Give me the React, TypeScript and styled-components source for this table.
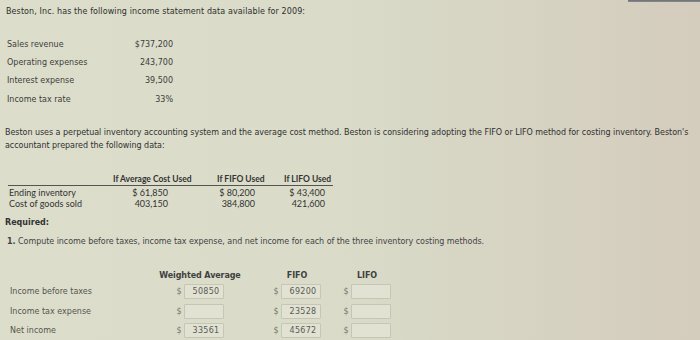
import React from "react";
import styled, { createGlobalStyle } from "styled-components";

const GlobalStyle = createGlobalStyle`
  html, body {
    margin: 0;
    padding: 0;
  }
  body {
    width: 700px;
    height: 340px;
    overflow: hidden;
    font-family: "DejaVu Sans", Verdana, sans-serif;
  }
`;

type Figure = { label: string; value: string };

const incomeData: Figure[] = [
  { label: "Sales revenue", value: "$737,200" },
  { label: "Operating expenses", value: "243,700" },
  { label: "Interest expense", value: "39,500" },
  { label: "Income tax rate", value: "33%" },
];

type InvColumn = { title: string; first: string; second: string; pad: number; headPad: number };

const invColumns: InvColumn[] = [
  { title: "If Average Cost Used", first: "$ 61,850", second: "403,150", pad: 30, headPad: 5 },
  { title: "If FIFO Used", first: "$ 80,200", second: "384,800", pad: 29, headPad: 19 },
  { title: "If LIFO Used", first: "$ 43,400", second: "421,600", pad: 8, headPad: 0 },
];

type AnswerRow = { label: string; values: string[] };

const answers: AnswerRow[] = [
  { label: "Income before taxes", values: ["50850", "69200", ""] },
  { label: "Income tax expense", values: ["", "23528", ""] },
  { label: "Net income", values: ["33561", "45672", ""] },
];

const answerCols = [
  { title: "Weighted Average", width: 80 },
  { title: "FIFO", width: 114 },
  { title: "LIFO", width: 26 },
];

const App = () => {
  return (
    <Page>
      <GlobalStyle />
      <Title>Beston, Inc. has the following income statement data available for 2009:</Title>

      <DataList>
        {incomeData.map((item) => (
          <React.Fragment key={item.label}>
            <DataLabel>{item.label}</DataLabel>
            <DataValue>{item.value}</DataValue>
          </React.Fragment>
        ))}
      </DataList>

      <Paragraph>
        Beston uses a perpetual inventory accounting system and the average cost method. Beston is
        considering adopting the FIFO or LIFO method for costing inventory. Beston's
        <br />
        accountant prepared the following data:
      </Paragraph>

      <InvTable>
        <InvHead />
        {invColumns.map((c) => (
          <InvHead key={c.title} $pad={c.headPad}>
            {c.title}
          </InvHead>
        ))}
        <InvLabel>
          Ending inventory
          <br />
          Cost of goods sold
        </InvLabel>
        {invColumns.map((c) => (
          <InvValue key={c.title} $pad={c.pad}>
            {c.first}
            <br />
            {c.second}
          </InvValue>
        ))}
      </InvTable>

      <Required>Required:</Required>
      <Instruction>
        <b>1.</b> Compute income before taxes, income tax expense, and net income for each of the three
        inventory costing methods.
      </Instruction>

      <AnswerGrid>
        <AnswerRowBox $head>
          <RowLabel />
          {answerCols.map((c) => (
            <Cell key={c.title} $width={c.width}>
              <ColHead>{c.title}</ColHead>
            </Cell>
          ))}
        </AnswerRowBox>
        {answers.map((row) => (
          <AnswerRowBox key={row.label}>
            <RowLabel>{row.label}</RowLabel>
            {row.values.map((v, i) => (
              <Cell key={i} $width={answerCols[i].width}>
                <Dollar>$</Dollar>
                <InputBox>{v}</InputBox>
              </Cell>
            ))}
          </AnswerRowBox>
        ))}
      </AnswerGrid>
    </Page>
  );
};

const Page = styled.div`
  width: 700px;
  height: 340px;
  box-sizing: border-box;
  padding-top: 6px;
  overflow: hidden;
  color: #333;
  background:
    linear-gradient(#6e6e78, #8a8a90) no-repeat 628px 0 / 72px 2px,
    linear-gradient(90deg, #dcdecb 0%, #dadcc9 45%, #d7d5c4 70%, #d4ccbd 100%);
`;

const Title = styled.div`
  margin-left: 6px;
  font-size: 8px;
  line-height: 12px;
  color: #2e2e2e;
  white-space: nowrap;
  letter-spacing: 0.1px;
`;

const DataList = styled.div`
  display: grid;
  grid-template-columns: 126px 40px;
  grid-auto-rows: 18.3px;
  align-items: center;
  margin: 17px 0 0 7px;
  width: 166px;
  font-size: 8px;
  color: #3c3c3a;
`;

const DataLabel = styled.div`
  white-space: nowrap;
`;

const DataValue = styled.div`
  text-align: right;
  white-space: nowrap;
`;

const Paragraph = styled.div`
  margin: 19px 0 0 5px;
  font-size: 8px;
  line-height: 12.5px;
  color: #303030;
  white-space: nowrap;
  letter-spacing: -0.04px;
`;

const InvTable = styled.div`
  display: grid;
  grid-template-columns: 100px 90px 86px 49px;
  margin: 21.5px 0 0 8px;
  width: 325px;
  font-family: Lato, "Open Sans", sans-serif;
  color: #333;
`;

const InvHead = styled.div<{ $pad?: number }>`
  height: 11px;
  line-height: 11px;
  border-bottom: 1px solid #55554f;
  font-size: 8.5px;
  font-weight: 700;
  white-space: nowrap;
  padding-left: ${(p) => p.$pad ?? 0}px;
`;

const InvLabel = styled.div`
  padding: 1px 0 0 1px;
  font-size: 9px;
  line-height: 11px;
  white-space: nowrap;
`;

const InvValue = styled.div<{ $pad: number }>`
  padding-top: 1px;
  font-size: 9px;
  line-height: 11px;
  text-align: right;
  padding-right: ${(p) => p.$pad}px;
  white-space: nowrap;
`;

const Required = styled.div`
  margin: 8.5px 0 0 5px;
  font-size: 8px;
  line-height: 12px;
  font-weight: 700;
  color: #333;
`;

const Instruction = styled.div`
  margin: 7px 0 0 7px;
  font-size: 8px;
  line-height: 12px;
  color: #444;
  white-space: nowrap;
  letter-spacing: -0.05px;
`;

const AnswerGrid = styled.div`
  display: flex;
  flex-direction: column;
  margin: 20.5px 0 0 10px;
`;

const AnswerRowBox = styled.div<{ $head?: boolean }>`
  display: flex;
  align-items: center;
  height: ${(p) => (p.$head ? "13.5px" : "19.5px")};
`;

const RowLabel = styled.div`
  width: 150px;
  flex-shrink: 0;
  font-size: 8px;
  color: #55554f;
  white-space: nowrap;
`;

const Cell = styled.div<{ $width: number }>`
  display: flex;
  justify-content: center;
  align-items: center;
  width: ${(p) => p.$width}px;
  flex-shrink: 0;
`;

const ColHead = styled.div`
  flex-shrink: 0;
  font-size: 8px;
  font-weight: 700;
  color: #404040;
  white-space: nowrap;
  letter-spacing: -0.1px;
`;

const Dollar = styled.span`
  flex-shrink: 0;
  font-size: 8px;
  color: #77776f;
  margin-right: 2px;
`;

const InputBox = styled.div`
  flex-shrink: 0;
  box-sizing: border-box;
  width: 40px;
  height: 15px;
  padding-left: 8px;
  border: 1px solid #c5c6b6;
  border-radius: 1px;
  background: #e1e2d2;
  font-size: 8px;
  line-height: 13px;
  color: #5a5a56;
  letter-spacing: 0.3px;
`;

export default App;
